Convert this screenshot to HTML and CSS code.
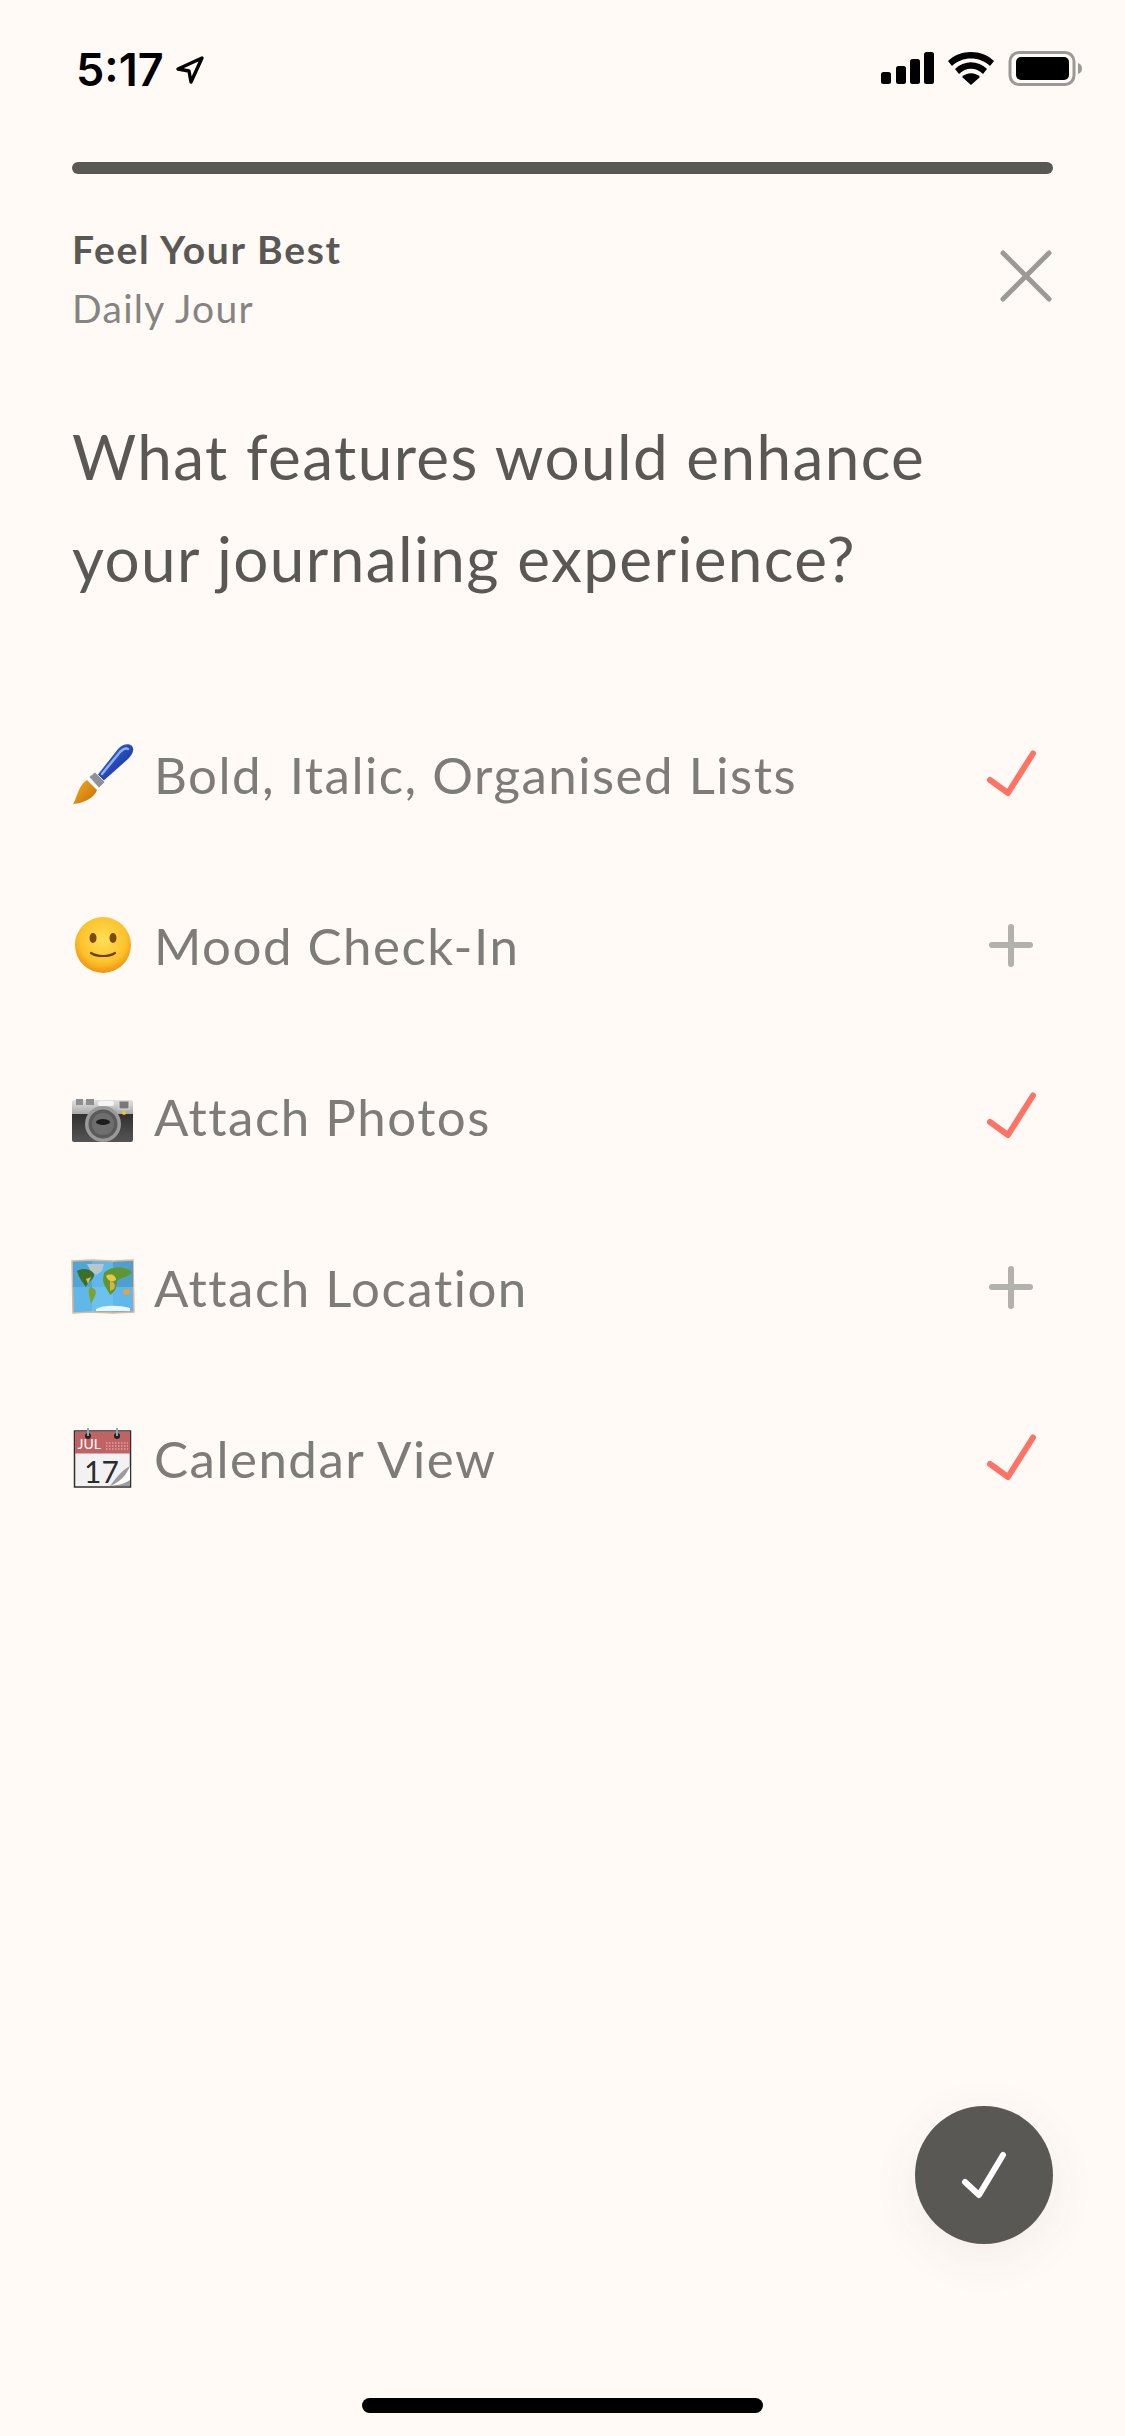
FILE: index.html
```html
<!DOCTYPE html>
<html lang="en">
<head>
    <meta charset="UTF-8">
    <meta name="viewport" content="width=device-width, initial-scale=1.0">
    <title>Feel Your Best</title>
    <link rel="stylesheet" href="styles.css">
</head>
<body>
    <div class="screen">
        <div class="status-bar">
            <div class="status-left">
                <span class="time">5:17</span>
                <svg class="arrow" width="30" height="30" viewBox="0 0 30 30"><path d="M27 3 L3 14 L14 16 L16 27 Z" fill="none" stroke="#000" stroke-width="3.4" stroke-linejoin="round"/></svg>
            </div>
            <svg class="status-icons" width="202" height="36" viewBox="0 0 202 36">
                <rect x="0" y="21" width="10" height="12" rx="2.5"/>
                <rect x="15" y="15" width="10" height="18" rx="2.5"/>
                <rect x="29" y="8" width="10" height="25" rx="2.5"/>
                <rect x="43" y="1" width="10" height="32" rx="2.5"/>
                <path d="M67 10 C79 -2 101 -2 113 10 L109 15 C99 5 81 5 71 15 Z"/>
                <path d="M74 18 C83 9 97 9 106 18 L102 23 C95 16 85 16 78 23 Z"/>
                <path d="M81 26 C86 21 94 21 99 26 L90 34 Z"/>
                <rect x="129" y="1.5" width="64" height="32" rx="9" fill="none" stroke="#9a9997" stroke-width="3"/>
                <rect x="135" y="6" width="53" height="23" rx="5"/>
                <path d="M197 12 C200 13 201 15 201 17.5 C201 20 200 22 197 23 Z" fill="#9a9997"/>
            </svg>
        </div>

        <div class="progress"></div>

        <div class="header">
            <div>
                <div class="title">Feel Your Best</div>
                <div class="subtitle">Daily Jour</div>
            </div>
            <svg class="close" width="54" height="54" viewBox="0 0 54 54"><path d="M4 4 L50 50 M50 4 L4 50" stroke="#9b9a97" stroke-width="5" stroke-linecap="round"/></svg>
        </div>

        <h1 class="question">What features would enhance your journaling experience?</h1>

        <div class="options">
            <div class="option">
                <svg class="emoji" width="62" height="62" viewBox="0 0 62 62">
                    <defs>
                        <linearGradient id="handle" x1="0" y1="0" x2="1" y2="1"><stop offset="0" stop-color="#3f6fdc"/><stop offset="0.55" stop-color="#2347b4"/><stop offset="1" stop-color="#12297c"/></linearGradient>
                        <linearGradient id="bristle" x1="0" y1="0" x2="1" y2="1"><stop offset="0" stop-color="#f4ab24"/><stop offset="1" stop-color="#c56f08"/></linearGradient>
                    </defs>
                    <path d="M24 33 L46 5 C50 0 57 -1 60 2 C63 6 60 11 56 15 L29 39 Z" fill="url(#handle)"/>
                    <path d="M30 30 L48 8 C51 5 54 4 56 5" fill="none" stroke="#8fb0f2" stroke-width="2.5" stroke-linecap="round"/>
                    <path d="M17 33 L23 28 L33 38 L27 44 Z" fill="#8f9296" stroke="#eee" stroke-width="1"/>
                    <path d="M15 36 L25 46 C23 53 13 59 1 60 C5 55 6 41 15 36 Z" fill="url(#bristle)"/>
                </svg>
                <span class="option-text">Bold, Italic, Organised Lists</span>
                <svg class="mark" width="60" height="60" viewBox="0 0 60 60"><path d="M9 27 L27 40 L52 0.5" transform="translate(0 8)" fill="none" stroke="#ff7366" stroke-width="6" stroke-linecap="round" stroke-linejoin="round"/></svg>
            </div>
            <div class="option">
                <svg class="emoji" width="62" height="62" viewBox="0 0 62 62">
                    <defs>
                        <radialGradient id="face" cx="0.5" cy="0.4" r="0.6"><stop offset="0" stop-color="#ffdf55"/><stop offset="0.7" stop-color="#fcc22c"/><stop offset="1" stop-color="#ef9210"/></radialGradient>
                    </defs>
                    <circle cx="31" cy="30" r="28" fill="url(#face)"/>
                    <ellipse cx="21" cy="23" rx="3.5" ry="5" fill="#7b4a10"/>
                    <ellipse cx="41" cy="23" rx="3.5" ry="5" fill="#7b4a10"/>
                    <path d="M19 38 C25 42 37 42 43 38" fill="none" stroke="#6b3f0c" stroke-width="2.2" stroke-linecap="round"/>
                </svg>
                <span class="option-text">Mood Check-In</span>
                <svg class="mark" width="60" height="60" viewBox="0 0 60 60"><path d="M30 11 L30 48 M11 29 L49 29" stroke="#b3b1ac" stroke-width="6" stroke-linecap="round"/></svg>
            </div>
            <div class="option">
                <svg class="emoji" width="62" height="62" viewBox="0 0 62 62">
                    <defs>
                        <linearGradient id="cam-top" x1="0" y1="0" x2="0" y2="1"><stop offset="0" stop-color="#e2e2e2"/><stop offset="1" stop-color="#a9a9a9"/></linearGradient>
                        <linearGradient id="cam-body" x1="0" y1="0" x2="0" y2="1"><stop offset="0" stop-color="#2e2e2e"/><stop offset="1" stop-color="#555"/></linearGradient>
                    </defs>
                    <rect x="0" y="26" width="61" height="30" rx="2" fill="url(#cam-body)"/>
                    <path d="M0 28 L0 16 Q0 14 2 14 L59 14 Q61 14 61 16 L61 28 Z" fill="url(#cam-top)"/>
                    <rect x="4" y="13" width="7" height="6" fill="#8e8e8e"/>
                    <rect x="14" y="13" width="8" height="6" fill="#8e8e8e"/>
                    <rect x="26" y="15" width="16" height="5" rx="2.5" fill="#f4f4f4"/>
                    <rect x="47" y="15" width="10" height="8" fill="#777" stroke="#ddd" stroke-width="1"/>
                    <circle cx="31" cy="38" r="18" fill="#9a9a9a"/>
                    <circle cx="31" cy="38" r="14.5" fill="#5b5b5b"/>
                    <circle cx="31" cy="38" r="11" fill="#6e6e6e"/>
                    <ellipse cx="31" cy="36" rx="7" ry="3" fill="#1d1d1d"/>
                    <circle cx="52" cy="27" r="2" fill="#f5c518"/>
                </svg>
                <span class="option-text">Attach Photos</span>
                <svg class="mark" width="60" height="60" viewBox="0 0 60 60"><path d="M9 27 L27 40 L52 0.5" transform="translate(0 8)" fill="none" stroke="#ff7366" stroke-width="6" stroke-linecap="round" stroke-linejoin="round"/></svg>
            </div>
            <div class="option">
                <svg class="emoji" width="62" height="62" viewBox="0 0 62 62">
                    <path d="M0 4 L20 3 L41 4 L61 3 L62 55 L41 56 L20 55 L1 56 Z" fill="#5fb7ea" stroke="#e6b68c" stroke-width="1.5"/>
                    <path d="M1 5 L20 4 L20 30 L1 30 Z" fill="#4fa6d8"/>
                    <path d="M41 5 L61 4 L61 30 L41 30 Z" fill="#4fa0d0"/>
                    <path d="M20 30 L41 30 L41 55 L20 54 Z" fill="#6cc2ef"/>
                    <path d="M15 7 L32 7 L30 14 L24 18 L18 13 Z" fill="#b9c6cc"/>
                    <path d="M5 14 C12 10 20 13 22 17 C23 22 16 24 14 30 C11 26 7 21 5 14 Z" fill="#3b6f2a"/>
                    <path d="M14 22 C17 21 20 20 20 18 L16 27 Z" fill="#d9c04a"/>
                    <path d="M18 30 C23 31 26 34 22 41 L19 47 C18 40 15 35 18 30 Z" fill="#7aa32f"/>
                    <path d="M32 16 C38 9 54 9 60 15 C56 21 49 20 45 24 C45 31 42 36 38 38 C36 33 31 28 31 22 Z" fill="#5f962e"/>
                    <path d="M34 19 C38 16 44 18 44 23 C40 26 36 24 34 19 Z" fill="#e8c74a"/>
                    <path d="M38 24 C42 25 44 27 42 32 L38 34 Z" fill="#d8b142"/>
                    <path d="M51 33 L57 32 L58 37 L52 38 Z" fill="#e8a23a"/>
                    <path d="M24 52 C32 48 46 48 58 51 L58 54 L24 54 Z" fill="#eef5f8"/>
                </svg>
                <span class="option-text">Attach Location</span>
                <svg class="mark" width="60" height="60" viewBox="0 0 60 60"><path d="M30 11 L30 48 M11 29 L49 29" stroke="#b3b1ac" stroke-width="6" stroke-linecap="round"/></svg>
            </div>
            <div class="option">
                <svg class="emoji" width="62" height="62" viewBox="0 0 62 62">
                    <rect x="2.5" y="3" width="56" height="56" fill="#f2f2f2" stroke="#2f2f2f" stroke-width="1.5"/>
                    <rect x="3" y="3.5" width="55" height="22" fill="#bf6365"/>
                    <circle cx="16" cy="8" r="3" fill="#222"/>
                    <circle cx="45" cy="8" r="3" fill="#222"/>
                    <rect x="15" y="0" width="2" height="8" fill="#8aa"/>
                    <rect x="44" y="0" width="2" height="8" fill="#8aa"/>
                    <text x="5.5" y="21" class="cal-month">JUL</text>
                    <path d="M34 15 H56 M34 18 H56 M34 21 H56" stroke="#e8c4c4" stroke-width="1" stroke-dasharray="1.5 1.5"/>
                    <text x="12" y="55" class="cal-day">17</text>
                    <path d="M58 38 C50 42 44 50 38 58 L58 58 Z" fill="#9c9c9c"/>
                    <path d="M58 38 C54 48 48 54 38 58 C48 57 54 55 58 52 Z" fill="#fff"/>
                </svg>
                <span class="option-text">Calendar View</span>
                <svg class="mark" width="60" height="60" viewBox="0 0 60 60"><path d="M9 27 L27 40 L52 0.5" transform="translate(0 8)" fill="none" stroke="#ff7366" stroke-width="6" stroke-linecap="round" stroke-linejoin="round"/></svg>
            </div>
        </div>

        <button class="done" type="button">
            <svg width="60" height="60" viewBox="0 0 60 60"><path d="M5 29 L19 42 L43 2" transform="translate(6 8)" fill="none" stroke="#fff" stroke-width="6" stroke-linecap="round" stroke-linejoin="round"/></svg>
        </button>

        <div class="home-indicator"></div>
    </div>
</body>
</html>
```

FILE: styles.css
```css
body {
    margin: 0;
    background-color: #fffaf6;
    font-family: "Lato", "Noto Sans", sans-serif;
    color: #5a5855;
}

.screen {
    position: relative;
    display: flex;
    flex-direction: column;
    width: 1125px;
    height: 2436px;
    overflow: hidden;
    box-sizing: border-box;
    padding: 0 72px;
}

.status-bar {
    display: flex;
    justify-content: space-between;
    align-items: center;
    height: 70px;
    margin: 34px -30px 58px 4px;
}

.status-left {
    display: flex;
    align-items: center;
    gap: 11px;
}

.time {
    font-family: "Inter", sans-serif;
    font-weight: 600;
    font-size: 45px;
    color: #000;
}

.arrow {
    margin-top: 2px;
}

.status-icons {
    fill: #000;
}

.progress {
    height: 12px;
    border-radius: 6px;
    background-color: #5a5855;
}

.header {
    display: flex;
    justify-content: space-between;
    align-items: center;
    margin-top: 50px;
}

.title {
    font-size: 39px;
    font-weight: 700;
    line-height: 50px;
    letter-spacing: 1.7px;
}

.subtitle {
    font-size: 39px;
    line-height: 50px;
    letter-spacing: 1.3px;
    margin-top: 9px;
    color: #858481;
}

.close {
    margin-bottom: 5px;
}

.question {
    margin: 72px 0 0;
    font-size: 62px;
    font-weight: 400;
    line-height: 102px;
    letter-spacing: 1.4px;
    max-width: 900px;
}

.options {
    display: flex;
    flex-direction: column;
    margin-top: 80px;
}

.option {
    display: flex;
    align-items: center;
    height: 171px;
}

.emoji {
    flex: none;
    margin-right: 20px;
    overflow: visible;
}

.option-text {
    flex: 1;
    font-size: 51px;
    letter-spacing: 1.5px;
    color: #7d7c79;
}

.mark {
    flex: none;
    margin-right: 12px;
}

.cal-month {
    font-family: "Lato", sans-serif;
    font-size: 14px;
    fill: #fff;
}

.cal-day {
    font-family: "Lato", sans-serif;
    font-size: 30px;
    fill: #2c2c2c;
}

.done {
    position: absolute;
    left: 915px;
    top: 2106px;
    width: 138px;
    height: 138px;
    padding: 0;
    border: none;
    border-radius: 50%;
    background-color: #5a5855;
    box-shadow: 0 12px 50px rgba(90, 70, 60, 0.07);
    display: flex;
    align-items: center;
    justify-content: center;
}

.home-indicator {
    position: absolute;
    left: 362px;
    top: 2398px;
    width: 401px;
    height: 15px;
    border-radius: 8px;
    background-color: #000;
}
```
